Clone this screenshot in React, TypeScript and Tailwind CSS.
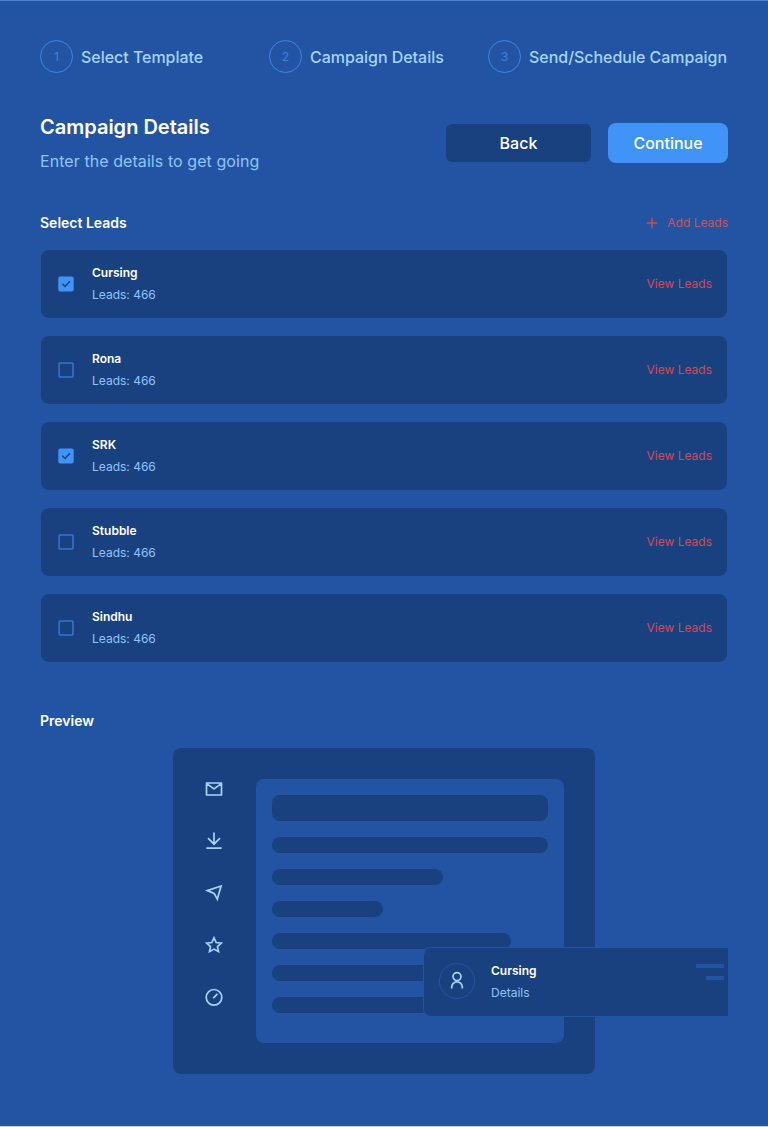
import React from "react";

const steps = [
  { label: "Select Template", width: "w-[229px]" },
  { label: "Campaign Details", width: "w-[219px]" },
  { label: "Send/Schedule Campaign", width: "w-[240px]" },
];

const leads = [
  { name: "Cursing", checked: true },
  { name: "Rona", checked: false },
  { name: "SRK", checked: true },
  { name: "Stubble", checked: false },
  { name: "Sindhu", checked: false },
];

function Checkbox({ checked }: { checked: boolean }) {
  return (
    <svg viewBox="0 0 16 16" className="size-4 shrink-0" fill="none" strokeWidth="1.5">
      {checked ? (
        <>
          <rect x="0.3" y="0.5" width="15.4" height="15" rx="2" fill="#4094f7" />
          <path d="M4.3 7.7l2.8 2.8 4.8-5.2" stroke="#1a417f" />
        </>
      ) : (
        <rect x="1.1" y="1.1" width="13.9" height="13.9" rx="1" stroke="#3a75d2" />
      )}
    </svg>
  );
}

function Icon({ children }: { children: React.ReactNode }) {
  return (
    <svg viewBox="0 0 20 20" className="size-5 shrink-0" fill="none" stroke="currentColor" strokeWidth="1.7">
      {children}
    </svg>
  );
}

export default function App() {
  return (
    <main className="relative h-[1127px] w-[768px] overflow-hidden border-t border-b border-t-[#4b83cc] border-b-[#c9d8f0] bg-[#2354a3] px-10 font-['Inter',sans-serif] text-white">
      <nav className="flex pt-[39px]">
        {steps.map((step, i) => (
          <div key={step.label} className={`flex shrink-0 items-center gap-2 ${step.width}`}>
            <span className="flex size-[33px] shrink-0 items-center justify-center rounded-full border border-[#3f87e5] text-[12px] text-[#3f82de]">
              {i + 1}
            </span>
            <span className="text-[16px] leading-6 font-medium tracking-[-0.03px] whitespace-nowrap text-[#a4d3ff]">{step.label}</span>
          </div>
        ))}
      </nav>

      <header className="mt-[39px] flex h-[64px] justify-between">
        <div>
          <h1 className="text-[20px] leading-[30px] font-semibold">Campaign Details</h1>
          <p className="mt-[7px] text-[16px] leading-6 tracking-[0.07px] text-[#91c3fa]">Enter the details to get going</p>
        </div>
        <div className="mt-[11px] flex h-10 items-center gap-[17px] text-[16px] font-medium">
          <button className="h-[38px] w-[145px] rounded-md bg-[#1a417f]">Back</button>
          <button className="h-10 w-[120px] rounded-lg bg-[#4094f7]">Continue</button>
        </div>
      </header>

      <section className="mt-[37px]">
        <div className="flex h-5 items-center justify-between">
          <h2 className="text-[14px] leading-5 font-semibold">Select Leads</h2>
          <button className="flex items-center gap-[9px] text-[12px] text-[#d04e5f]">
            <svg viewBox="0 0 12 12" className="size-3" fill="none" stroke="#e0444f" strokeWidth="1.4">
              <path d="M6 .8v10.4M.8 6h10.4" />
            </svg>
            Add Leads
          </button>
        </div>
        <ul className="mt-[17px] flex flex-col gap-[18px] px-px">
          {leads.map((lead) => (
            <li key={lead.name} className="flex h-[68px] items-center rounded-lg bg-[#1a417f] pr-[15px] pl-[17px]">
              <Checkbox checked={lead.checked} />
              <div className="ml-[18px] text-[12px]">
                <p className="leading-[22px] font-semibold">{lead.name}</p>
                <p className="leading-[22px] text-[#91c3fa]">Leads: 466</p>
              </div>
              <button className="ml-auto text-[12px] text-[#cb4c5d]">View Leads</button>
            </li>
          ))}
        </ul>
      </section>

      <section className="mt-[49px]">
        <h2 className="text-[14px] leading-5 font-semibold">Preview</h2>
        <div className="relative mt-[17px] ml-[133px] flex h-[326px] w-[422px] rounded-lg bg-[#1a417f]">
          <div className="mr-px flex w-[82px] flex-col items-center gap-8 pt-[31px] text-[#a4d3ff]">
            <Icon>
              <path d="M2.5 4h15v12h-15zM3 4.9l7 5 7-5" strokeLinejoin="round" />
            </Icon>
            <Icon>
              <path d="M10 1.5v12M4 7.2l6 6 6-6M2.3 17.2h15.4" />
            </Icon>
            <Icon>
              <path d="M3.3 7.6L17.1 3l-3.8 13.2-2.4-4.6a3.6 3.6 0 00-2-1.7z" />
            </Icon>
            <Icon>
              <path d="M10 2.8l2.2 4.7 5.1.6-3.8 3.5 1 5-4.5-2.5-4.5 2.5 1-5-3.8-3.5 5.1-.6z" />
            </Icon>
            <Icon>
              <circle cx="10" cy="10.3" r="7.8" />
              <path d="M9.2 11.2l4.3-4.3" />
            </Icon>
          </div>
          <div className="mt-[31px] flex h-[264px] w-[308px] flex-col gap-4 rounded-lg bg-[#2354a3] p-4">
            <span className="h-[26px] w-[276px] rounded-lg bg-[#1a417f]" />
            <span className="h-4 w-[276px] rounded-full bg-[#1a417f]" />
            <span className="h-4 w-[171px] rounded-full bg-[#1a417f]" />
            <span className="h-4 w-[111px] rounded-full bg-[#1a417f]" />
            <span className="h-4 w-[239px] rounded-full bg-[#1a417f]" />
            <span className="h-4 w-[239px] rounded-full bg-[#1a417f]" />
            <span className="h-4 w-[239px] rounded-full bg-[#1a417f]" />
          </div>
          <div className="absolute top-[199px] left-[250px] flex h-[70px] w-[305px] items-center rounded-l-lg border border-r-0 border-[#2354a3] bg-[#1a417f] pr-1 pl-[15px]">
            <span className="-mt-0.5 flex size-9 items-center justify-center rounded-full border border-[#2354a3] text-[#a4d3ff]">
              <Icon>
                <circle cx="10" cy="5.6" r="4" />
                <path d="M4.7 17.6v-1.4a5.3 5.3 0 0110.6 0v1.4" />
              </Icon>
            </span>
            <div className="ml-4 text-[12px]">
              <p className="leading-[22px] font-semibold">Cursing</p>
              <p className="leading-[22px] text-[#91c3fa]">Details</p>
            </div>
            <div className="mt-[-20px] ml-auto flex flex-col items-end gap-2">
              <span className="h-1 w-7 bg-[#2354a3]" />
              <span className="h-1 w-[18px] bg-[#2354a3]" />
            </div>
          </div>
        </div>
      </section>
    </main>
  );
}
